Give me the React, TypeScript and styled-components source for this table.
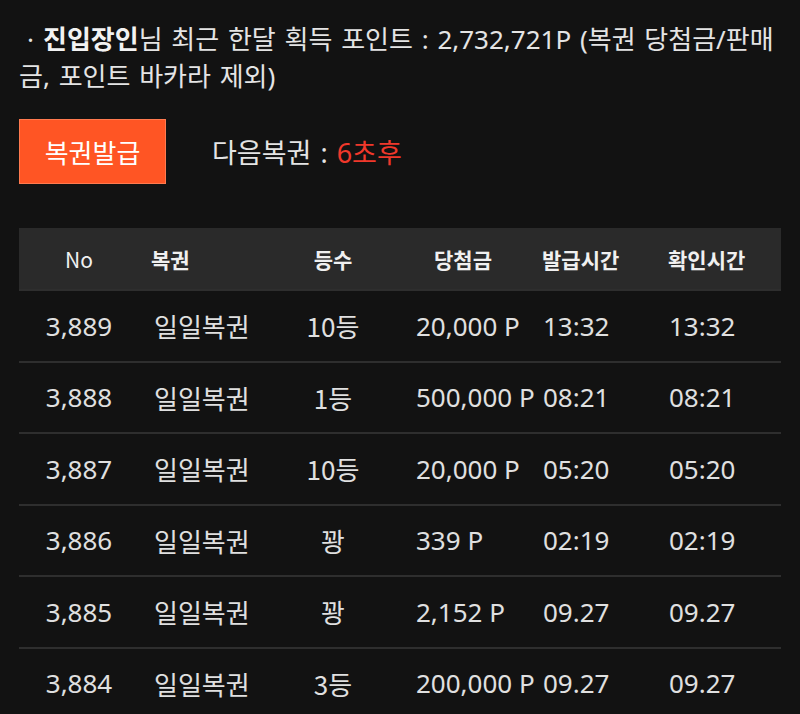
import React from "react";
import styled, { createGlobalStyle } from "styled-components";

const Global = createGlobalStyle`
  html, body { margin: 0; padding: 0; background: #121212; }
  body { font-family: "Noto Sans", "Noto Sans CJK KR", sans-serif; color: #e2e2e2; }
`;

const Page = styled.div`
  width: 800px;
  height: 714px;
  overflow: hidden;
  box-sizing: border-box;
  padding: 21px 19px 0 19px;
  background: #121212;
`;

const Summary = styled.p`
  margin: 0;
  width: 762px;
  font-size: 26px;
  line-height: 37px;
  word-spacing: 2px;
  color: #e4e4e4;
  font-family: "Noto Sans", "Noto Sans CJK KR", sans-serif;
`;

const Bullet = styled.span`
  padding: 0 9px 0 8px;
`;

const Name = styled.b`
  font-weight: 700;
  color: #f2f2f2;
`;

const ActionRow = styled.div`
  display: flex;
  align-items: center;
  gap: 46px;
  margin-top: 24px;
`;

const IssueButton = styled.button`
  width: 147px;
  height: 65px;
  border: 1px solid #ff7a4f;
  background: #ff5524;
  color: #ffffff;
  font-family: "Noto Sans CJK KR", sans-serif;
  font-size: 26px;
  padding: 0;
  cursor: pointer;
`;

const NextInfo = styled.div`
  font-family: "Noto Sans", "Noto Sans CJK KR", sans-serif;
  font-size: 27px;
  word-spacing: 2px;
  color: #e4e4e4;
`;

const Countdown = styled.span`
  color: #f0382b;
`;

const Table = styled.div`
  margin-top: 44px;
  width: 762px;
`;

const Row = styled.div<{ $head?: boolean }>`
  display: grid;
  grid-template-columns: 120px 151px 86px 164px 126px 115px;
  align-items: center;
  height: ${(p) => (p.$head ? "61px" : "69.5px")};
  background: ${(p) => (p.$head ? "#2a2a2a" : "transparent")};
  border-bottom: 2px solid #2e2e2e;
`;

type Align = "center" | "left";

const Cell = styled.div<{ $align: Align; $pad: number; $head?: boolean; $num?: boolean; $light?: boolean }>`
  text-align: ${(p) => p.$align};
  padding-left: ${(p) => p.$pad}px;
  white-space: nowrap;
  font-family: ${(p) =>
    p.$num ? `"Noto Sans", "Noto Sans CJK KR", sans-serif` : `"Noto Sans CJK KR", sans-serif`};
  font-size: ${(p) => (p.$head ? "21px" : "26px")};
  font-weight: ${(p) => (p.$head && !p.$light ? 700 : 400)};
  color: ${(p) => (p.$head ? "#f0f0f0" : "#e0e0e0")};
`;

const cols: { align: Align; pad: number; headPad: number; num: boolean }[] = [
  { align: "center", pad: 0, headPad: 0, num: true },
  { align: "left", pad: 15, headPad: 12, num: false },
  { align: "center", pad: 0, headPad: 0, num: false },
  { align: "left", pad: 40, headPad: 58, num: true },
  { align: "left", pad: 3, headPad: 2, num: true },
  { align: "left", pad: 3, headPad: 2, num: true },
];

const headers = ["No", "복권", "등수", "당첨금", "발급시간", "확인시간"];

const rows = [
  ["3,889", "일일복권", "10등", "20,000 P", "13:32", "13:32"],
  ["3,888", "일일복권", "1등", "500,000 P", "08:21", "08:21"],
  ["3,887", "일일복권", "10등", "20,000 P", "05:20", "05:20"],
  ["3,886", "일일복권", "꽝", "339 P", "02:19", "02:19"],
  ["3,885", "일일복권", "꽝", "2,152 P", "09.27", "09.27"],
  ["3,884", "일일복권", "3등", "200,000 P", "09.27", "09.27"],
];

export default function App() {
  return (
    <Page>
      <Global />
      <Summary>
        <Bullet>·</Bullet>
        <Name>진입장인</Name>님 최근 한달 획득 포인트 : 2,732,721P (복권 당첨금/판매금, 포인트 바카라 제외)
      </Summary>
      <ActionRow>
        <IssueButton>복권발급</IssueButton>
        <NextInfo>
          다음복권 : <Countdown>6초후</Countdown>
        </NextInfo>
      </ActionRow>
      <Table>
        <Row $head>
          {headers.map((h, i) => (
            <Cell key={h} $head $light={i === 0} $align={cols[i].align} $pad={cols[i].headPad}>
              {h}
            </Cell>
          ))}
        </Row>
        {rows.map((r) => (
          <Row key={r[0]}>
            {r.map((v, i) => (
              <Cell key={i} $align={cols[i].align} $pad={cols[i].pad} $num={cols[i].num}>
                {v}
              </Cell>
            ))}
          </Row>
        ))}
      </Table>
    </Page>
  );
}
